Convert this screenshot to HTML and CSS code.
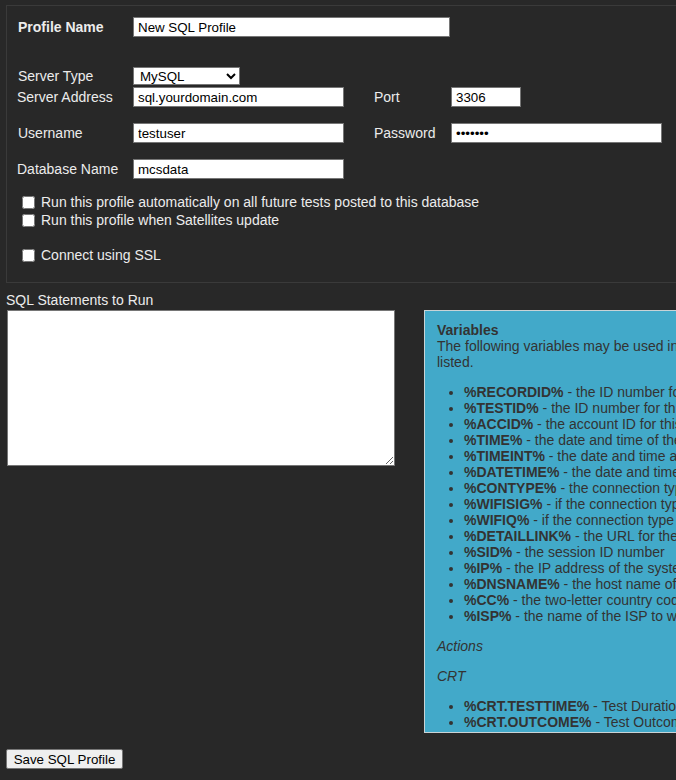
FILE: index.html
```html
<!DOCTYPE html>
<html>
<head>
<meta charset="utf-8">
<link rel="stylesheet" href="styles.css">
</head>
<body>
<div class="page">
  <fieldset class="settings">
    <div class="row">
      <label class="lbl lbl-bold">Profile Name</label>
      <input class="field w-name" type="text" value="New SQL Profile">
    </div>
    <div class="row row-type">
      <label class="lbl">Server Type</label>
      <select class="sel"><option>MySQL</option><option>MSSQL</option></select>
    </div>
    <div class="row row-tight">
      <label class="lbl lbl-shift">Server Address</label>
      <input class="field w-mid" type="text" value="sql.yourdomain.com">
      <label class="lbl lbl2">Port</label>
      <input class="field w-port" type="text" value="3306">
    </div>
    <div class="row row-gap">
      <label class="lbl">Username</label>
      <input class="field w-mid" type="text" value="testuser">
      <label class="lbl lbl2">Password</label>
      <input class="field w-mid" type="password" value="1234567">
    </div>
    <div class="row row-gap">
      <label class="lbl lbl-shift">Database Name</label>
      <input class="field w-mid" type="text" value="mcsdata">
    </div>
    <div class="checks">
      <label class="check"><input type="checkbox" class="cb">Run this profile automatically on all future tests posted to this database</label>
      <label class="check"><input type="checkbox" class="cb">Run this profile when Satellites update</label>
      <label class="check check-ssl"><input type="checkbox" class="cb">Connect using SSL</label>
    </div>
  </fieldset>

  <div class="sql-label">SQL Statements to Run</div>
  <div class="sql-row">
    <textarea class="sql"></textarea>
    <div class="vars">
      <div class="vars-title">Variables</div>
      <div class="vars-intro">The following variables may be used in your SQL statements and will be replaced by the values<br>listed.</div>
      <ul class="vlist">
        <li><b>%RECORDID%</b> - the ID number for this test record</li>
        <li><b>%TESTID%</b> - the ID number for this test type</li>
        <li><b>%ACCID%</b> - the account ID for this test</li>
        <li><b>%TIME%</b> - the date and time of the test</li>
        <li><b>%TIMEINT%</b> - the date and time as an integer</li>
        <li><b>%DATETIME%</b> - the date and time formatted for SQL</li>
        <li><b>%CONTYPE%</b> - the connection type of the system</li>
        <li><b>%WIFISIG%</b> - if the connection type is WiFi, the signal strength</li>
        <li><b>%WIFIQ%</b> - if the connection type is WiFi, the link quality</li>
        <li><b>%DETAILLINK%</b> - the URL for the test detail page</li>
        <li><b>%SID%</b> - the session ID number</li>
        <li><b>%IP%</b> - the IP address of the system tested</li>
        <li><b>%DNSNAME%</b> - the host name of the system tested</li>
        <li><b>%CC%</b> - the two-letter country code of the system</li>
        <li><b>%ISP%</b> - the name of the ISP to which the system belongs</li>
      </ul>
      <p class="sect">Actions</p>
      <p class="sect">CRT</p>
      <ul class="vlist vlist-last">
        <li><b>%CRT.TESTTIME%</b> - Test Duration</li>
        <li><b>%CRT.OUTCOME%</b> - Test Outcome</li>
      </ul>
    </div>
  </div>
  <button class="save" type="button">Save SQL Profile</button>
</div>
</body>
</html>
```

FILE: styles.css
```css
html, body {
  margin: 0;
  padding: 0;
  overflow: hidden;
  background: #282828;
}
body {
  font-family: "Liberation Sans", Arial, sans-serif;
  font-size: 14px;
  line-height: 16px;
  color: #ececec;
}
.page {
  width: 1040px;
  padding: 5px 0 0 6px;
}
.settings {
  margin: 0;
  border: 1px solid #3a3a3a;
  padding: 11px 0 18px 11px;
  min-width: 0;
}
.row {
  display: flex;
  align-items: center;
  height: 20px;
}
.row-type {
  margin-top: 30px;
  height: 18px;
}
.row-tight {
  margin-top: 2px;
}
.row-gap {
  margin-top: 16px;
}
.lbl {
  width: 115px;
  flex: none;
}
.lbl-shift {
  margin-left: -1px;
  width: 116px;
}
.lbl-bold {
  font-weight: bold;
}
.lbl2 {
  width: 77px;
  margin-left: 30px;
}
.field {
  box-sizing: border-box;
  height: 20px;
  border: 1px solid #767676;
  background: #fff;
  color: #000;
  padding: 0 4px;
  font-family: "Liberation Sans", Arial, sans-serif;
  font-size: 13.33px;
  margin: 0;
  border-radius: 0;
}
.w-name { width: 317px; }
.w-mid { width: 211px; }
.w-port { width: 70px; }
.sel {
  box-sizing: border-box;
  width: 107px;
  height: 18px;
  margin: 0;
  padding: 0 0 0 2px;
  border: 1px solid #767676;
  border-radius: 0;
  background: #fff;
  color: #000;
  font-family: "Liberation Sans", Arial, sans-serif;
  font-size: 13.33px;
}
.checks {
  margin-top: 14px;
  display: flex;
  flex-direction: column;
}
.check {
  display: flex;
  align-items: center;
  height: 18px;
}
.check-ssl {
  margin-top: 17px;
}
.cb {
  width: 13px;
  height: 13px;
  margin: 0 6px 0 4px;
}
.sql-label {
  margin-top: 9px;
  height: 16px;
}
.sql-row {
  display: flex;
  align-items: flex-start;
  margin-top: 2px;
}
.sql {
  box-sizing: border-box;
  width: 388px;
  height: 156px;
  margin: 0 0 0 1px;
  border: 1px solid #767676;
  background: #fff;
  flex: none;
}
.vars {
  margin-left: 29px;
  width: 600px;
  flex: none;
  background: #42a9c9;
  border: 1px solid #c9d3d6;
  color: #333;
  padding: 11px 12px 2px 12px;
}
.vars-title {
  font-weight: bold;
}
.vars-intro {
  white-space: nowrap;
}
.vlist {
  margin: 14px 0;
  padding-left: 27px;
}
.vlist li {
  white-space: nowrap;
}
.vlist-last {
  margin-bottom: 0;
}
.sect {
  margin: 14px 0;
  font-style: italic;
}
.save {
  display: block;
  margin-top: 16px;
  box-sizing: border-box;
  width: 117px;
  height: 20px;
  padding: 0;
  background: #efefef;
  color: #000;
  border: 1px solid #767676;
  border-radius: 2px;
  font-family: "Liberation Sans", Arial, sans-serif;
  font-size: 13.33px;
}
```
